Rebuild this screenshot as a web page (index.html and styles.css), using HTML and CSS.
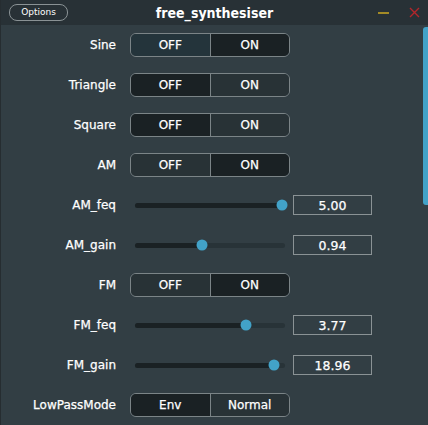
FILE: index.html
```html
<!DOCTYPE html>
<html>
<head>
<meta charset="utf-8">
<link rel="stylesheet" href="styles.css">
</head>
<body>
<div class="window">
  <header class="titlebar">
    <div class="tb-left"><button class="options">Options</button></div>
    <div class="title">free_synthesiser</div>
    <div class="tb-right">
      <span class="minimize"></span>
      <svg class="close" width="11" height="11" viewBox="0 0 11 11"><path d="M1 1 L10 10 M10 1 L1 10" stroke="#b3262b" stroke-width="1.4" fill="none"/></svg>
    </div>
  </header>
  <main class="content">
    <div class="row"><span class="label">Sine</span><div class="toggle"><span class="seg hover">OFF</span><span class="seg on">ON</span></div></div>
    <div class="row"><span class="label">Triangle</span><div class="toggle"><span class="seg on">OFF</span><span class="seg">ON</span></div></div>
    <div class="row"><span class="label">Square</span><div class="toggle"><span class="seg on">OFF</span><span class="seg">ON</span></div></div>
    <div class="row"><span class="label">AM</span><div class="toggle"><span class="seg">OFF</span><span class="seg on">ON</span></div></div>
    <div class="row"><span class="label">AM_feq</span><div class="slider"><div class="track"><div class="fill" style="width:98%"></div><div class="thumb" style="left:98%"></div></div></div><div class="valuebox">5.00</div></div>
    <div class="row"><span class="label">AM_gain</span><div class="slider"><div class="track"><div class="fill" style="width:44.5%"></div><div class="thumb" style="left:44.5%"></div></div></div><div class="valuebox">0.94</div></div>
    <div class="row"><span class="label">FM</span><div class="toggle"><span class="seg">OFF</span><span class="seg on">ON</span></div></div>
    <div class="row"><span class="label">FM_feq</span><div class="slider"><div class="track"><div class="fill" style="width:73.8%"></div><div class="thumb" style="left:73.8%"></div></div></div><div class="valuebox">3.77</div></div>
    <div class="row"><span class="label">FM_gain</span><div class="slider"><div class="track"><div class="fill" style="width:92.7%"></div><div class="thumb" style="left:92.7%"></div></div></div><div class="valuebox">18.96</div></div>
    <div class="row"><span class="label">LowPassMode</span><div class="toggle"><span class="seg on">Env</span><span class="seg">Normal</span></div></div>
  </main>
  <div class="scrollbar"></div>
</div>
</body>
</html>
```
FILE: styles.css
```css
* { box-sizing: border-box; }
html, body { margin: 0; padding: 0; }
body {
  background: #323e44;
  font-family: "DejaVu Sans", sans-serif;
  color: #ffffff;
  width: 428px;
  height: 425px;
  overflow: hidden;
}
.window {
  position: relative;
  width: 428px;
  height: 425px;
  background: #323e44;
  border-left: 1px solid #262d31;
}
.titlebar {
  height: 25px;
  background: #283136;
  display: grid;
  grid-template-columns: 1fr auto 1fr;
  align-items: center;
}
.tb-left { display: flex; align-items: center; padding-left: 8px; }
.options {
  width: 59px;
  height: 17px;
  border: 1px solid #8a9295;
  border-radius: 8px;
  background: #283136;
  color: #ffffff;
  font-family: "DejaVu Sans", sans-serif;
  font-size: 9px;
  padding: 0;
  line-height: 15px;
}
.title {
  font-family: "DejaVu Sans", sans-serif;
  font-stretch: condensed;
  font-weight: bold;
  font-size: 14px;
}
.tb-right {
  display: flex;
  justify-content: flex-end;
  align-items: center;
  padding-right: 8px;
  gap: 20px;
}
.minimize {
  display: block;
  width: 11px;
  height: 2px;
  background: #a38a26;
}
.close { display: block; }
.content {
  display: flex;
  flex-direction: column;
}
.row {
  height: 40px;
  display: flex;
  align-items: center;
}
.label {
  width: 115px;
  margin-right: 14px;
  text-align: right;
  font-size: 12px;
  -webkit-text-stroke: 0.25px #ffffff;
}
.toggle {
  width: 160px;
  height: 24px;
  border: 1px solid #7b8487;
  border-radius: 6px;
  display: flex;
  overflow: hidden;
}
.seg {
  flex: 1;
  display: flex;
  align-items: center;
  justify-content: center;
  background: #283236;
  font-size: 12px;
  -webkit-text-stroke: 0.25px #ffffff;
}
.seg + .seg { border-left: 1px solid #7b8487; }
.seg.on { background: #1a2124; }
.seg.hover { background: #24343b; }
.slider {
  width: 160px;
  height: 24px;
  display: flex;
  align-items: center;
  padding: 0 5px;
}
.track {
  position: relative;
  flex: 1;
  height: 5px;
  border-radius: 3px;
  background: #283338;
}
.fill {
  height: 5px;
  border-radius: 3px;
  background: #1a2124;
}
.thumb {
  position: absolute;
  top: 50%;
  width: 11px;
  height: 11px;
  border-radius: 50%;
  background: #42a2c8;
  transform: translate(-50%, -50%);
}
.valuebox {
  margin-left: 3px;
  width: 79px;
  height: 20px;
  border: 1px solid #8a9295;
  display: flex;
  align-items: center;
  justify-content: center;
  font-size: 12.5px;
  -webkit-text-stroke: 0.25px #ffffff;
}
.scrollbar {
  position: absolute;
  right: 0;
  top: 27px;
  width: 5px;
  height: 178px;
  background: #42a2c8;
  border-radius: 3px 0 0 3px;
}
```
